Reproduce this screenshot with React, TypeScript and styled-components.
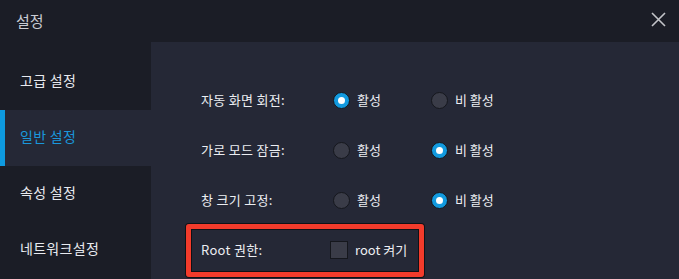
import React from "react";
import styled, { createGlobalStyle, css } from "styled-components";

const Global = createGlobalStyle`
  html, body { margin: 0; padding: 0; background: #1b1d26; }
  body { font-family: "Noto Sans CJK KR", "Noto Sans", sans-serif; }
  * { box-sizing: border-box; }
`;

const Window = styled.div`
  position: relative;
  width: 679px;
  height: 279px;
  display: flex;
  flex-direction: column;
  background: #1b1d26;
  overflow: hidden;
`;

const Header = styled.div`
  height: 42px;
  display: flex;
  align-items: center;
  justify-content: space-between;
  padding: 0 12px 0 16px;
  background: #1b1d26;
`;

const Title = styled.div`
  font-size: 15px;
  color: #c9ccd3;
  line-height: 1;
  margin-top: -1px;
`;

const CloseButton = styled.button`
  width: 18px;
  height: 18px;
  padding: 0;
  border: 0;
  background: none;
  display: flex;
  align-items: center;
  justify-content: center;
  margin-top: -4px;
`;

const Body = styled.div`
  flex: 1;
  display: flex;
`;

const Sidebar = styled.nav`
  width: 151px;
  padding-top: 12px;
  display: flex;
  flex-direction: column;
  background: #1b1d26;
`;

const NavItem = styled.div<{ $active?: boolean }>`
  height: 56px;
  display: flex;
  align-items: center;
  padding-left: 20px;
  padding-bottom: 5px;
  font-size: 14px;
  letter-spacing: 0.3px;
  color: #e8eaef;
  ${(p) =>
    p.$active &&
    css`
      background: #252836;
      color: #1a97db;
      box-shadow: inset 5px 0 0 #0e9ae0;
    `}
`;

const Content = styled.main`
  flex: 1;
  background: #252836;
  padding: 33px 0 0 35px;
  display: flex;
  flex-direction: column;
`;

const Row = styled.div<{ $highlight?: boolean }>`
  position: relative;
  height: 50px;
  width: 238px;
  display: flex;
  align-items: center;
  padding-left: 15px;
  ${(p) =>
    p.$highlight &&
    css`
      &::after {
        content: "";
        position: absolute;
        left: 0;
        right: 0;
        top: -1px;
        bottom: -2px;
        border: 5px solid #f33b2b;
        border-radius: 3px;
        box-shadow: 0 0 0 1px #101116, inset 0 0 0 1px #101116;
        pointer-events: none;
      }
    `}
`;

const Label = styled.div`
  width: 132px;
  flex-shrink: 0;
  font-size: 13px;
  letter-spacing: 0.3px;
  color: #eceef2;
  padding-bottom: 2px;
  white-space: nowrap;
`;

const Options = styled.div`
  display: flex;
  align-items: center;
`;

const Option = styled.label`
  width: 98px;
  display: flex;
  align-items: center;
  gap: 7px;
  font-size: 13px;
  color: #eceef2;
  white-space: nowrap;
`;

const OptionText = styled.span`
  padding-bottom: 2px;
`;

const Radio = styled.span<{ $checked?: boolean }>`
  width: 17px;
  height: 17px;
  border-radius: 50%;
  border: 1px solid #15171d;
  background: ${(p) => (p.$checked ? "#129adf" : "#3a3c48")};
  display: flex;
  align-items: center;
  justify-content: center;
  flex-shrink: 0;
  &::after {
    content: "";
    display: ${(p) => (p.$checked ? "block" : "none")};
    width: 7px;
    height: 7px;
    border-radius: 50%;
    background: #ffffff;
  }
`;

const CheckOption = styled.label`
  display: flex;
  align-items: center;
  gap: 7px;
  margin-left: -3px;
  font-size: 13px;
  color: #eceef2;
  white-space: nowrap;
`;

const CheckBox = styled.span`
  width: 18px;
  height: 18px;
  border: 1px solid #15171d;
  background: #3a3c48;
  flex-shrink: 0;
`;

type RadioRowProps = { label: string; value: "on" | "off" };

const RadioRow: React.FC<RadioRowProps> = ({ label, value }) => (
  <Row>
    <Label>{label}</Label>
    <Options>
      <Option>
        <Radio $checked={value === "on"} />
        <OptionText>활성</OptionText>
      </Option>
      <Option>
        <Radio $checked={value === "off"} />
        <OptionText>비 활성</OptionText>
      </Option>
    </Options>
  </Row>
);

export default function App() {
  return (
    <Window>
      <Global />
      <Header>
        <Title>설정</Title>
        <CloseButton aria-label="닫기">
          <svg width="15" height="15" viewBox="0 0 15 15">
            <path d="M1 1 L14 14 M14 1 L1 14" stroke="#c3c4c8" strokeWidth="1.6" />
          </svg>
        </CloseButton>
      </Header>
      <Body>
        <Sidebar>
          <NavItem>고급 설정</NavItem>
          <NavItem $active>일반 설정</NavItem>
          <NavItem>속성 설정</NavItem>
          <NavItem>네트워크설정</NavItem>
        </Sidebar>
        <Content>
          <RadioRow label="자동 화면 회전:" value="on" />
          <RadioRow label="가로 모드 잠금:" value="off" />
          <RadioRow label="창 크기 고정:" value="off" />
          <Row $highlight>
            <Label>Root 권한:</Label>
            <CheckOption>
              <CheckBox />
              <OptionText>root 켜기</OptionText>
            </CheckOption>
          </Row>
        </Content>
      </Body>
    </Window>
  );
}
